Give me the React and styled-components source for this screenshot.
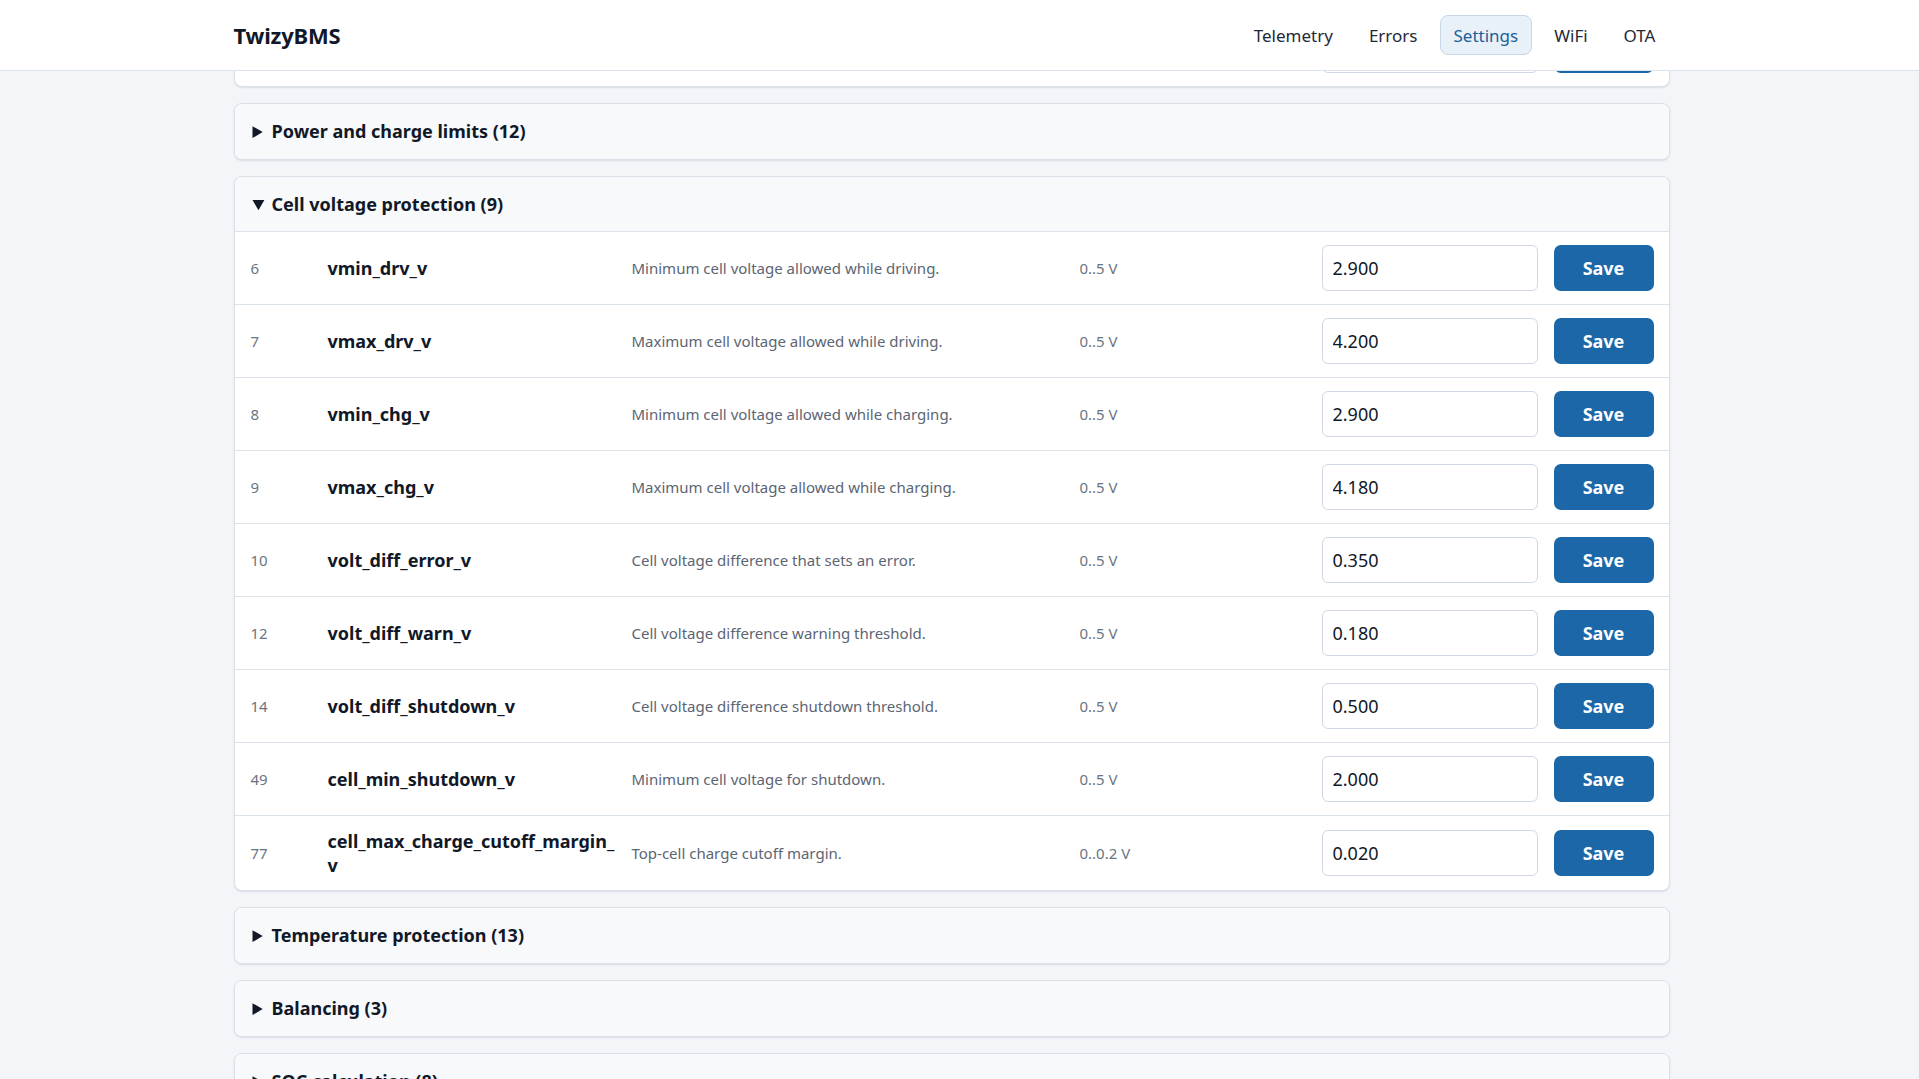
import React, { useLayoutEffect, useRef } from "react";
import styled, { createGlobalStyle } from "styled-components";

const GlobalStyle = createGlobalStyle`
  * { box-sizing: border-box; }
  html, body { margin: 0; padding: 0; height: 100%; overflow: hidden; }
  body {
    background: #f3f5f9;
    color: #111827;
    font-family: "Noto Sans", "Open Sans", Arial, sans-serif;
  }
`;

const coreRows = [
  { id: 1, name: "pack_capacity_ah", desc: "Nominal pack capacity.", range: "0..200 Ah", value: "100.000" },
  { id: 2, name: "cell_count", desc: "Number of cells in series.", range: "1..16", value: "14" },
  { id: 3, name: "temp_sensor_count", desc: "Number of temperature sensors.", range: "0..8", value: "7" },
  { id: 4, name: "current_sensor_gain", desc: "Current sensor calibration factor.", range: "0..10", value: "1.000" },
  { id: 5, name: "current_sensor_offset_a", desc: "Current sensor zero offset.", range: "-50..50 A", value: "0.000" },
];

const cellRows = [
  { id: 6, name: "vmin_drv_v", desc: "Minimum cell voltage allowed while driving.", range: "0..5 V", value: "2.900" },
  { id: 7, name: "vmax_drv_v", desc: "Maximum cell voltage allowed while driving.", range: "0..5 V", value: "4.200" },
  { id: 8, name: "vmin_chg_v", desc: "Minimum cell voltage allowed while charging.", range: "0..5 V", value: "2.900" },
  { id: 9, name: "vmax_chg_v", desc: "Maximum cell voltage allowed while charging.", range: "0..5 V", value: "4.180" },
  { id: 10, name: "volt_diff_error_v", desc: "Cell voltage difference that sets an error.", range: "0..5 V", value: "0.350" },
  { id: 12, name: "volt_diff_warn_v", desc: "Cell voltage difference warning threshold.", range: "0..5 V", value: "0.180" },
  { id: 14, name: "volt_diff_shutdown_v", desc: "Cell voltage difference shutdown threshold.", range: "0..5 V", value: "0.500" },
  { id: 49, name: "cell_min_shutdown_v", desc: "Minimum cell voltage for shutdown.", range: "0..5 V", value: "2.000" },
  { id: 77, name: "cell_max_charge_cutoff_margin_v", desc: "Top-cell charge cutoff margin.", range: "0..0.2 V", value: "0.020" },
];

const closedGroups = [
  { title: "Temperature protection", count: 13 },
  { title: "Balancing", count: 3 },
  { title: "SOC calculation", count: 8 },
  { title: "Charger and CAN", count: 6 },
  { title: "Miscellaneous", count: 4 },
];

// break long names after the last underscore, like the device UI does
function splitName(name) {
  const i = name.lastIndexOf("_");
  if (name.length < 28 || i < 0) return name;
  return (
    <>
      {name.slice(0, i + 1)}
      <wbr />
      {name.slice(i + 1)}
    </>
  );
}

function ParamRow({ row }) {
  return (
    <Row>
      <Id>{row.id}</Id>
      <Name>{splitName(row.name)}</Name>
      <Desc>{row.desc}</Desc>
      <Range>{row.range}</Range>
      <ValueInput defaultValue={row.value} />
      <SaveButton>Save</SaveButton>
    </Row>
  );
}

function Group({ title, rows }) {
  return (
    <Card open>
      <Summary>
        {title} ({rows.length})
      </Summary>
      {rows.map((r) => (
        <ParamRow key={r.id} row={r} />
      ))}
    </Card>
  );
}

export default function App() {
  const scrollRef = useRef(null);
  const powerRef = useRef(null);

  useLayoutEffect(() => {
    const box = scrollRef.current;
    const card = powerRef.current;
    if (!box || !card) return;
    const offset = card.getBoundingClientRect().top - box.getBoundingClientRect().top;
    box.scrollTop = box.scrollTop + offset - 32;
  }, []);

  return (
    <>
      <GlobalStyle />
      <Shell>
        <Header>
          <HeaderInner>
            <Brand>TwizyBMS</Brand>
            <Nav>
              <NavItem>Telemetry</NavItem>
              <NavItem>Errors</NavItem>
              <NavItem active>Settings</NavItem>
              <NavItem>WiFi</NavItem>
              <NavItem>OTA</NavItem>
            </Nav>
          </HeaderInner>
        </Header>
        <Scroller ref={scrollRef}>
          <Main>
            <PageTitle>Settings</PageTitle>
            <Lead>Parameters are stored in flash and applied immediately after saving.</Lead>
            <Group title="Pack configuration" rows={coreRows} />
            <Card ref={powerRef}>
              <Summary>Power and charge limits (12)</Summary>
            </Card>
            <Group title="Cell voltage protection" rows={cellRows} />
            {closedGroups.map((g) => (
              <Card key={g.title}>
                <Summary>
                  {g.title} ({g.count})
                </Summary>
              </Card>
            ))}
          </Main>
        </Scroller>
      </Shell>
    </>
  );
}

const Shell = styled.div`
  height: 100vh;
  display: flex;
  flex-direction: column;
`;

const Header = styled.header`
  flex: none;
  height: 71px;
  background: #ffffff;
  border-bottom: 1px solid #dde3eb;
  padding-right: 16px;
`;

const HeaderInner = styled.div`
  max-width: 1436px;
  height: 100%;
  margin: 0 auto;
  display: flex;
  align-items: center;
  justify-content: space-between;
`;

const Brand = styled.div`
  font-size: 22px;
  font-weight: 700;
  letter-spacing: -0.2px;
  color: #111827;
`;

const Nav = styled.nav`
  display: flex;
  align-items: center;
  gap: 8px;
`;

const NavItem = styled.a`
  display: inline-flex;
  align-items: center;
  height: 40px;
  padding: 0 13px;
  font-size: 17px;
  color: ${(p) => (p.active ? "#1b5f99" : "#1f2937")};
  background: ${(p) => (p.active ? "#e8f0f8" : "transparent")};
  border: 1px solid ${(p) => (p.active ? "#c7d7e8" : "transparent")};
  border-radius: 8px;
  cursor: pointer;
`;

const Scroller = styled.div`
  flex: 1;
  overflow-y: scroll;
  padding-right: 16px;
`;

const Main = styled.main`
  max-width: 1436px;
  margin: 0 auto;
  padding: 24px 0 40px;
  display: flex;
  flex-direction: column;
  gap: 16px;
`;

const PageTitle = styled.h1`
  margin: 0;
  font-size: 26px;
  font-weight: 700;
`;

const Lead = styled.p`
  margin: -8px 0 0;
  font-size: 15px;
  color: #5b6573;
`;

const Card = styled.details`
  background: #ffffff;
  border: 1px solid #d9e0e8;
  border-radius: 8px;
  box-shadow: 0 1px 2px rgba(15, 23, 42, 0.1);
  overflow: hidden;
`;

const Summary = styled.summary`
  display: list-item;
  height: 55px;
  line-height: 55px;
  padding: 0 16px 0 18px;
  background: #f8f9fb;
  font-size: 18px;
  font-weight: 700;
  color: #111827;
  cursor: pointer;
  details[open] > & {
    border-bottom: 1px solid #dde3eb;
  }
`;

const Row = styled.div`
  display: grid;
  grid-template-columns: 61px 288px 432px 226px 216px 100px;
  column-gap: 16px;
  align-items: center;
  min-height: 73px;
  padding: 13px 16px;
  border-bottom: 1px solid #dde3eb;
  &:last-child {
    border-bottom: none;
  }
`;

const Id = styled.div`
  font-size: 15px;
  color: #6b7480;
`;

const Name = styled.div`
  font-size: 18px;
  font-weight: 700;
  line-height: 24px;
  color: #111827;
`;

const Desc = styled.div`
  font-size: 15px;
  color: #5b6573;
`;

const Range = styled.div`
  font-size: 15px;
  color: #6b7480;
`;

const ValueInput = styled.input`
  width: 100%;
  height: 46px;
  padding: 0 10px;
  font-family: inherit;
  font-size: 18px;
  color: #111827;
  background: #ffffff;
  border: 1px solid #cfd8e3;
  border-radius: 6px;
  outline: none;
`;

const SaveButton = styled.button`
  height: 46px;
  width: 100%;
  font-family: inherit;
  font-size: 18px;
  font-weight: 700;
  color: #ffffff;
  background: #1b67a8;
  border: none;
  border-radius: 7px;
  cursor: pointer;
`;
